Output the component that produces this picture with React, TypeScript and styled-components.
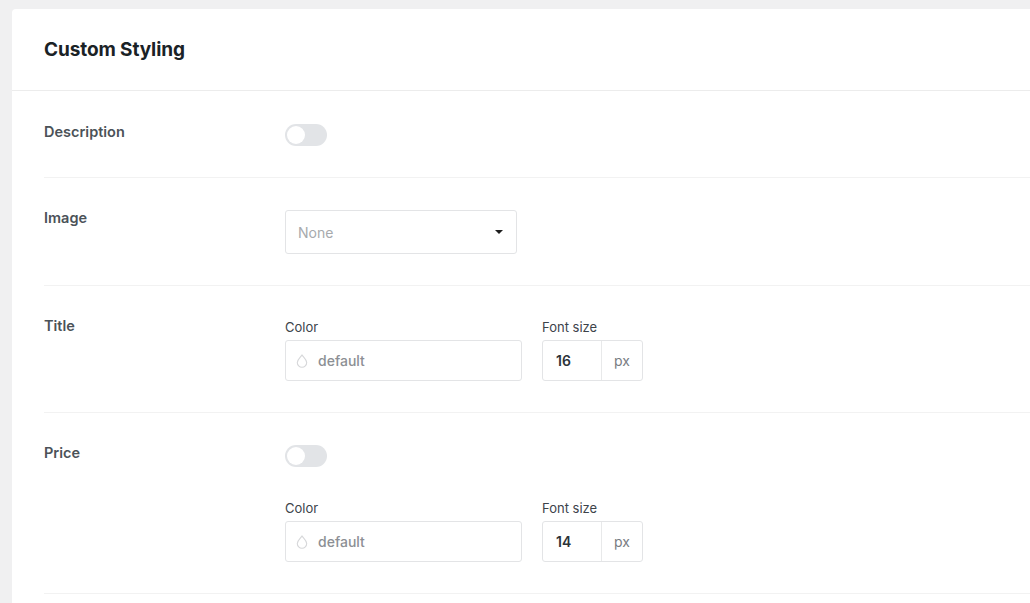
import React from 'react';
import styled, {createGlobalStyle} from 'styled-components';

const GlobalStyle = createGlobalStyle`
  html, body {
    margin: 0;
    overflow: hidden;
    background: #f0f0f1;
    font-family: Inter, "Liberation Sans", sans-serif;
  }
  body {
    padding: 9px 0 0 12px;
  }
`;

const Card = styled.div`
  width: 1100px;
  min-height: 640px;
  background: #fff;
  border-radius: 4px 0 0 0;
`;

const CardHeader = styled.div`
  height: 81px;
  padding: 0 32px;
  display: flex;
  align-items: center;
  border-bottom: 1px solid #ececec;
`;

const Heading = styled.h2`
  margin: 0 0 1px;
  font-size: 19px;
  font-weight: 700;
  color: #1a2226;
  letter-spacing: -0.1px;
`;

const CardBody = styled.div`
  padding-left: 32px;
`;

const Row = styled.div`
  display: flex;
  padding: 32px 0 31px;
  border-bottom: 1px solid #f2f2f2;

  &:first-child {
    padding-top: 33px;
  }
`;

const RowLabel = styled.div`
  width: 241px;
  flex-shrink: 0;
  font-size: 14.5px;
  line-height: 16px;
  font-weight: 600;
  color: #4b5258;
`;

const Controls = styled.div`
  display: flex;
  flex-direction: column;
  gap: ${(p: {gap?: number}) => p.gap ?? 0}px;
`;

const Track = styled.div`
  width: 42px;
  height: 22px;
  border-radius: 11px;
  background: #e2e4e7;
  padding: 2px;
  box-sizing: border-box;
`;

const Knob = styled.div`
  width: 18px;
  height: 18px;
  border-radius: 50%;
  background: #fff;
`;

const SelectBox = styled.div`
  width: 232px;
  height: 44px;
  box-sizing: border-box;
  border: 1px solid #e3e4e6;
  border-radius: 3px;
  display: flex;
  align-items: center;
  justify-content: space-between;
  padding: 0 12px;
  font-size: 14px;
  color: #a7aaad;
`;

const Caret = styled.span`
  width: 0;
  height: 0;
  border-left: 4px solid transparent;
  border-right: 4px solid transparent;
  border-top: 4px solid #1e1e1e;
  margin-right: 1px;
`;

const FieldGroup = styled.div`
  display: flex;
  gap: 20px;
`;

const Field = styled.div`
  display: flex;
  flex-direction: column;
  gap: 4px;
`;

const FieldLabel = styled.div`
  font-size: 13px;
  line-height: 18px;
  color: #3c434a;
`;

const ColorInput = styled.div`
  width: 237px;
  height: 41px;
  box-sizing: border-box;
  border: 1px solid #e3e4e6;
  border-radius: 3px;
  display: flex;
  align-items: center;
  gap: 10px;
  padding: 0 10px;
  font-size: 14px;
  font-weight: 500;
  color: #8c8f94;
`;

const SizeInput = styled.div`
  width: 101px;
  height: 41px;
  box-sizing: border-box;
  border: 1px solid #e3e4e6;
  border-radius: 3px;
  display: flex;
  font-size: 14px;
`;

const SizeValue = styled.div`
  width: 59px;
  display: flex;
  align-items: center;
  padding-left: 13px;
  box-sizing: border-box;
  font-weight: 600;
  color: #2c3338;
  border-right: 1px solid #e8e9ea;
`;

const SizeUnit = styled.div`
  flex: 1;
  display: flex;
  align-items: center;
  justify-content: center;
  color: #787c82;
`;

const Toggle = () => (
  <Track>
    <Knob/>
  </Track>
);

// colour swatch placeholder: a small outlined drop
const Drop = () => (
  <svg width="12" height="14" viewBox="0 0 12 14">
    <path d="M6 1 C4.5 3.3 1.3 5.6 1.3 8.6 a4.7 4.7 0 0 0 9.4 0 C10.7 5.6 7.5 3.3 6 1 Z"
          fill="none" stroke="#d6d7d9" strokeWidth="1.1"/>
  </svg>
);

const TextStyle = ({size}: {size: number}) => (
  <FieldGroup>
    <Field>
      <FieldLabel>Color</FieldLabel>
      <ColorInput><Drop/>default</ColorInput>
    </Field>
    <Field>
      <FieldLabel>Font size</FieldLabel>
      <SizeInput>
        <SizeValue>{size}</SizeValue>
        <SizeUnit>px</SizeUnit>
      </SizeInput>
    </Field>
  </FieldGroup>
);

const App = () => {
  return (
    <>
      <GlobalStyle/>
      <Card>
        <CardHeader>
          <Heading>Custom Styling</Heading>
        </CardHeader>
        <CardBody>
          <Row>
            <RowLabel>Description</RowLabel>
            <Toggle/>
          </Row>
          <Row>
            <RowLabel>Image</RowLabel>
            <SelectBox>None<Caret/></SelectBox>
          </Row>
          <Row>
            <RowLabel>Title</RowLabel>
            <TextStyle size={16}/>
          </Row>
          <Row>
            <RowLabel>Price</RowLabel>
            <Controls gap={32}>
              <Toggle/>
              <TextStyle size={14}/>
            </Controls>
          </Row>
        </CardBody>
      </Card>
    </>
  );
};

export default App;
